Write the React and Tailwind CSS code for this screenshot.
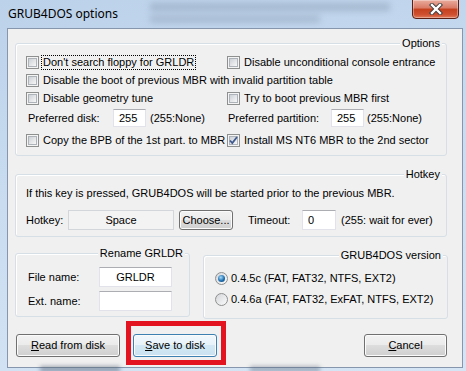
import React from 'react';

const font = { fontFamily: '"Liberation Sans", Arial, sans-serif' };

const CheckBox = ({ checked }) => (
  <span className="relative block w-[13px] h-[13px] shrink-0 border border-[#8e8f8f] bg-[#f4f4f4] p-[1px]">
    <span className="block w-full h-full border border-[#aeb3b9] bg-[linear-gradient(135deg,#cdd1d6,#f7f7f7)]" />
    {checked && (
      <svg className="absolute inset-0" width="11" height="11" viewBox="0 0 11 11">
        <path d="M2 5.5 L4.3 8 L9 2" fill="none" stroke="#3f5a8f" strokeWidth="1.8" />
      </svg>
    )}
  </span>
);

const Radio = ({ checked }) => (
  <span className="flex items-center justify-center w-[13px] h-[13px] shrink-0 rounded-full border border-[#8e8f8f] bg-[linear-gradient(135deg,#d3d6da,#fbfbfb)]">
    {checked && (
      <span className="block w-[7px] h-[7px] rounded-full bg-[radial-gradient(circle_at_40%_35%,#a8dcfa,#1f6fb0_55%,#0d3d6b)]" />
    )}
  </span>
);

const Check = ({ checked, focus, children }) => (
  <div className="flex items-center gap-[2px] h-[18px] whitespace-nowrap">
    <CheckBox checked={checked} />
    <span className={focus ? 'border border-dotted border-black px-[1px] leading-[13px]' : 'px-[2px]'}>{children}</span>
  </div>
);

const TextBox = ({ value, w, h = 'h-[20px]', center }) => (
  <div
    className={`${w} ${h} bg-white border border-[#e2e3ea] border-t-[#abadb3] flex items-center ${center ? 'justify-center' : 'pl-[5px]'}`}
  >
    {value}
  </div>
);

const Group = ({ label, className, children }) => (
  <div className={`relative border border-[#d5dfe5] rounded-[3px] shadow-[inset_1px_1px_0_#fff] ${className}`}>
    <span className="absolute right-[4px] -top-[8px] px-[2px] leading-[14px] bg-[#f0f0f0]">{label}</span>
    {children}
  </div>
);

const Button = ({ children, className = '', isDefault }) => (
  <div
    className={`flex items-center justify-center rounded-[3px] border shadow-[inset_0_0_0_1px_#fbfbfb] ${
      isDefault
        ? 'border-[#3c7fb1] bg-[linear-gradient(to_bottom,#f1f8fc_0%,#e6f2f9_50%,#d3e8f4_50%,#c9e2f1_100%)]'
        : 'border-[#707070] bg-[linear-gradient(to_bottom,#f2f2f2_0%,#ebebeb_50%,#dddddd_50%,#cfcfcf_100%)]'
    } ${className}`}
  >
    {children}
  </div>
);

export default function App() {
  return (
    <div
      className="relative w-[466px] h-[371px] overflow-hidden bg-[linear-gradient(170deg,#bcd2ea_0%,#c9dcf0_45%,#d6e5f5_100%)] text-[11px] text-black"
      style={font}
    >
      {/* blurred content behind the glass */}
      <div className="absolute left-[150px] top-[3px] w-[240px] h-[8px] bg-[#7d8fa6] opacity-40 blur-[3px]" />
      <div className="absolute left-[150px] top-[15px] w-[170px] h-[8px] bg-[#7d8fa6] opacity-35 blur-[3px]" />
      <div className="absolute left-[40px] top-[366px] w-[80px] h-[6px] bg-[#4e5d70] opacity-50 blur-[2px]" />
      <div className="absolute left-[250px] top-[366px] w-[70px] h-[6px] bg-[#4e5d70] opacity-40 blur-[2px]" />

      {/* title bar */}
      <div className="relative flex h-[28px]">
        <span className="pl-[8px] pt-[6px] text-[12px] leading-[16px] text-black" style={{ fontFamily: '"Noto Sans", "Liberation Sans", sans-serif' }}>
          GRUB4DOS options
        </span>
        <div className="absolute right-[7px] -top-[1px] w-[47px] h-[20px] rounded-b-[4px] border border-[#5b1f15] overflow-hidden flex items-center justify-center bg-[linear-gradient(to_bottom,#e9ab9c_0%,#d97a66_45%,#c5401f_50%,#cf4f2f_80%,#e07a5a_100%)] shadow-[inset_0_0_0_1px_rgba(255,255,255,0.35)]">
          <svg width="14" height="12" viewBox="0 0 14 12">
            <path d="M3 2 L11 10 M11 2 L3 10" stroke="#3b3b3b" strokeWidth="4.2" strokeLinecap="square" />
            <path d="M3 2 L11 10 M11 2 L3 10" stroke="#ffffff" strokeWidth="2.4" strokeLinecap="square" />
          </svg>
        </div>
      </div>

      {/* client area */}
      <div className="ml-[7px] w-[456px] h-[340px] border border-[#8596ad] bg-[#f0f0f0]">
        <div className="relative flex flex-col pl-[7px] w-[454px] h-[338px]">
          {/* Options */}
          <Group label="Options" className="mt-[14px] w-[432px] h-[113px] pt-[9px] pl-[10px]">
            <div className="grid grid-cols-[201px_1fr]">
              <Check focus>Don't search floppy for GRLDR</Check>
              <Check>Disable unconditional console entrance</Check>
              <div className="col-span-2">
                <Check>Disable the boot of previous MBR with invalid partition table</Check>
              </div>
              <Check>Disable geometry tune</Check>
              <Check>Try to boot previous MBR first</Check>
              <div className="flex items-center h-[22px]">
                <span className="w-[87px] pl-[2px]">Preferred disk:</span>
                <TextBox value="255" w="w-[33px]" h="h-[18px]" />
                <span className="ml-[4px]">(255:None)</span>
              </div>
              <div className="flex items-center h-[22px]">
                <span className="w-[104px] pl-[1px]">Preferred partition:</span>
                <TextBox value="255" w="w-[33px]" h="h-[18px]" />
                <span className="ml-[3px]">(255:None)</span>
              </div>
              <div className="mt-[2px]">
                <Check>Copy the BPB of the 1st part. to MBR</Check>
              </div>
              <div className="mt-[2px]">
                <Check checked>Install MS NT6 MBR to the 2nd sector</Check>
              </div>
            </div>
          </Group>

          {/* Hotkey */}
          <Group label="Hotkey" className="mt-[18px] w-[432px] h-[63px] pt-[10px] pl-[10px]">
            <div className="h-[17px] flex items-center">If this key is pressed, GRUB4DOS will be started prior to the previous MBR.</div>
            <div className="mt-[8px] h-[20px] flex items-center">
              <span className="w-[42px]">Hotkey:</span>
              <div className="w-[106px] h-[20px] flex items-center justify-center border border-[#d3d7dc] bg-[#f3f3f3]">Space</div>
              <Button className="ml-[5px] w-[54px] h-[20px]">Choose...</Button>
              <span className="ml-[15px] w-[54px]">Timeout:</span>
              <TextBox value="0" w="w-[34px]" />
              <span className="ml-[5px]">(255: wait for ever)</span>
            </div>
          </Group>

          {/* bottom groups */}
          <div className="flex items-start mt-[16px]">
            <Group label="Rename GRLDR" className="w-[175px] h-[64px] pt-[13px] pl-[12px]">
              <div className="flex items-center h-[20px]">
                <span className="w-[71px]">File name:</span>
                <TextBox value="GRLDR" w="w-[73px]" center />
              </div>
              <div className="flex items-center h-[20px] mt-[4px]">
                <span className="w-[71px]">Ext. name:</span>
                <TextBox value="" w="w-[73px]" />
              </div>
            </Group>
            <Group label="GRUB4DOS version" className="ml-[13px] mt-[2px] w-[245px] h-[64px] pt-[13px] pl-[11px]">
              <div className="flex items-center gap-[3px] h-[18px]">
                <Radio checked />
                <span>0.4.5c (FAT, FAT32, NTFS, EXT2)</span>
              </div>
              <div className="flex items-center gap-[3px] h-[18px] mt-[3px]">
                <Radio />
                <span>0.4.6a (FAT, FAT32, ExFAT, NTFS, EXT2)</span>
              </div>
            </Group>
          </div>

          {/* buttons */}
          <div className="flex mt-[15px] h-[23px]">
            <Button className="ml-[1px] w-[104px] h-[23px]">
              <span><u>R</u>ead from disk</span>
            </Button>
            <div className="relative ml-[13px]">
              <Button isDefault className="w-[84px] h-[23px]">
                <span><u>S</u>ave to disk</span>
              </Button>
              <div className="absolute -left-[7px] -top-[13px] w-[100px] h-[44px] border-[5px] border-[#e3141f]" />
            </div>
            <Button className="ml-auto mr-[15px] w-[83px] h-[23px]">
              <span><u>C</u>ancel</span>
            </Button>
          </div>
        </div>
      </div>
    </div>
  );
}
